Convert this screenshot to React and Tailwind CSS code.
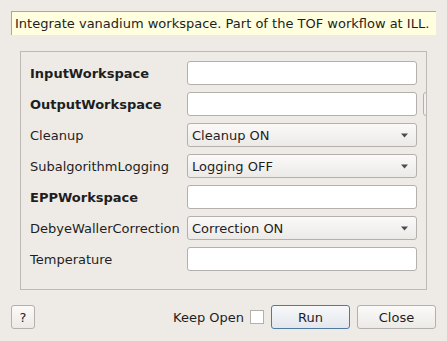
const font = { fontFamily: '"DejaVu Sans", sans-serif' };

function TextField() {
  return (
    <div className="h-[24px] w-[230px] shrink-0 rounded-[3px] border border-[#b3b0ad] bg-white" />
  );
}

function Combo({ value }) {
  return (
    <div className="flex h-[24px] w-[230px] shrink-0 items-center justify-between rounded-[3px] border border-[#b3b0ad] bg-gradient-to-b from-[#fbfaf9] to-[#eceae7] pl-[4px] pr-[7px]">
      <span className="mt-[2px]">{value}</span>
      <svg width="9" height="5" viewBox="0 0 9 5" className="mt-[1px]">
        <path d="M1 0.5 L8 0.5 L4.5 4.5 Z" fill="#4c4c4c" />
      </svg>
    </div>
  );
}

const rows = [
  { label: "InputWorkspace", bold: true, type: "text" },
  { label: "OutputWorkspace", bold: true, type: "text", extra: true },
  { label: "Cleanup", type: "combo", value: "Cleanup ON" },
  { label: "SubalgorithmLogging", type: "combo", value: "Logging OFF" },
  { label: "EPPWorkspace", bold: true, type: "text" },
  { label: "DebyeWallerCorrection", type: "combo", value: "Correction ON" },
  { label: "Temperature", type: "text" },
];

export default function App() {
  return (
    <div
      className="flex h-[341px] w-[447px] flex-col bg-[#eeebe7] text-[13px] text-[#1e1e1e]"
      style={font}
    >
      {/* DESCRIPTION */}
      <div className="mx-[11px] mt-[11px] flex h-[24px] items-center border-l border-t border-[#a9a7a3] bg-[#ffffdf] pl-[3px]">
        <span className="mt-[1px]">
          Integrate vanadium workspace. Part of the TOF workflow at ILL.
        </span>
      </div>

      {/* PROPERTIES */}
      <div className="ml-[20px] mt-[16px] w-[407px] overflow-hidden border border-[#bdb9b4] pb-[18px] pl-[9px] pt-[9px]">
        <div className="flex flex-col gap-[7px]">
          {rows.map((r) => (
            <div key={r.label} className="flex h-[24px] items-center">
              <div className={`mt-[2px] w-[157px] shrink-0 ${r.bold ? "font-bold" : ""}`}>
                {r.label}
              </div>
              {r.type === "text" ? <TextField /> : <Combo value={r.value} />}
              {r.extra && (
                <div className="ml-[6px] h-[24px] w-[24px] shrink-0 rounded-[3px] border border-[#b3b0ad] bg-[#f3f1ee]" />
              )}
            </div>
          ))}
        </div>
      </div>

      {/* BUTTONS */}
      <div className="mx-[11px] mt-[15px] flex h-[24px] items-center">
        <button className="h-[24px] w-[24px] rounded-[3px] border border-[#b3b0ad] bg-gradient-to-b from-[#fbfaf9] to-[#eceae7] pt-[2px]">
          ?
        </button>
        <div className="flex-1" />
        <span className="mt-[2px]">Keep Open</span>
        <div className="ml-[6px] h-[14px] w-[14px] border border-[#b3b0ad] bg-white" />
        <button className="ml-[7px] h-[24px] w-[79px] rounded-[3px] border border-[#4d7ba3] bg-gradient-to-b from-[#f7f8fa] to-[#e3e7ec] pt-[2px]">
          Run
        </button>
        <button className="ml-[7px] h-[24px] w-[79px] rounded-[3px] border border-[#b3b0ad] bg-gradient-to-b from-[#fbfaf9] to-[#eceae7] pt-[2px]">
          Close
        </button>
      </div>
    </div>
  );
}
